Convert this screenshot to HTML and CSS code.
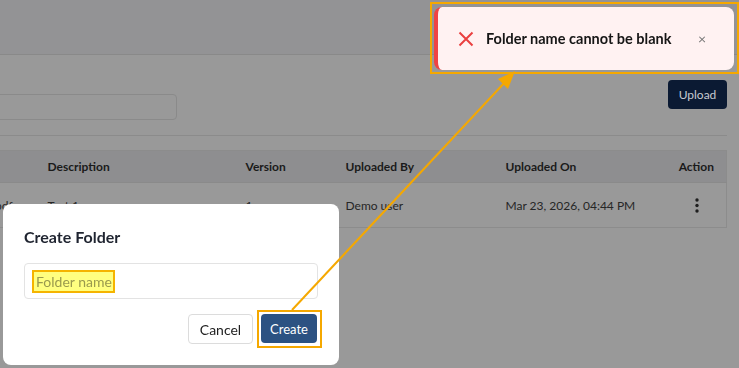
FILE: index.html
```html
<!DOCTYPE html>
<html lang="en">
<head>
<meta charset="utf-8">
<title>Documents</title>
<link rel="stylesheet" href="styles.css">
</head>
<body>
<div class="page">
  <header class="topbar"></header>
  <main class="main">
    <section class="toolbar">
      <input class="search" type="text" aria-label="Search">
      <button class="upload">Upload</button>
    </section>
    <section class="content">
      <table class="files">
        <colgroup>
          <col class="c-name"><col class="c-desc"><col class="c-ver"><col class="c-by"><col class="c-on"><col class="c-act">
        </colgroup>
        <thead>
          <tr><th>Name</th><th>Description</th><th>Version</th><th>Uploaded By</th><th>Uploaded On</th><th class="act">Action</th></tr>
        </thead>
        <tbody>
          <tr>
            <td>project_plan_v7.pdf</td><td>Test 1</td><td>1</td><td>Demo user</td><td>Mar 23, 2026, 04:44 PM</td>
            <td class="act"><svg class="kebab" width="4" height="15" viewBox="0 0 4 15"><circle cx="2" cy="2" r="1.7"/><circle cx="2" cy="7.5" r="1.7"/><circle cx="2" cy="13" r="1.7"/></svg></td>
          </tr>
        </tbody>
      </table>
    </section>
  </main>
</div>

<div class="toast" role="alert">
  <svg class="toast-icon" width="16" height="16" viewBox="0 0 16 16"><path d="M1.5 1.5 L14.5 14.5 M14.5 1.5 L1.5 14.5"/></svg>
  <span class="toast-text">Folder name cannot be blank</span>
  <span class="toast-close">&#215;</span>
</div>

<div class="modal" role="dialog">
  <h2 class="modal-title">Create Folder</h2>
  <div class="field">
    <input class="name-input" type="text" placeholder="Folder name">
    <span class="mark"></span>
  </div>
  <div class="actions">
    <button class="btn btn-cancel">Cancel</button>
    <button class="btn btn-create">Create</button>
  </div>
</div>

<svg class="arrow" width="739" height="368" viewBox="0 0 739 368">
  <line x1="292" y1="310" x2="507" y2="80"/>
  <polygon points="515,71 498,79 508,89"/>
</svg>
</body>
</html>
```

FILE: styles.css
```css
* { box-sizing: border-box; }
html, body { margin: 0; padding: 0; }
body {
  width: 739px;
  height: 368px;
  overflow: hidden;
  background: #999999;
  font-family: Lato, "Noto Sans", sans-serif;
  color: #1c1c1c;
}
.page { width: 739px; height: 368px; overflow: hidden; }
.topbar {
  height: 55px;
  background: #939395;
  border-bottom: 1px solid #898989;
}
.main { margin-left: -120px; padding: 0 12px 0 16px; }
.toolbar {
  height: 81px;
  display: flex;
  justify-content: space-between;
  align-items: flex-start;
  padding: 25px 0 15px;
  border-bottom: 1px solid #8b8b8b;
}
.search {
  align-self: flex-end;
  width: 281px;
  height: 26px;
  background: transparent;
  border: 1px solid #8a8a8a;
  border-radius: 4px;
}
.upload {
  width: 59px;
  height: 29px;
  background: #0b1a33;
  color: #c6cad1;
  border: 0;
  border-radius: 4px;
  font-family: inherit;
  font-size: 12px;
  padding: 0;
}
.content { padding-top: 14px; }
.files {
  width: 100%;
  table-layout: fixed;
  border-collapse: collapse;
  border: 1px solid #8c8c8c;
  font-size: 12px;
}
.c-name { width: 139px; }
.c-desc { width: 198px; }
.c-ver { width: 100px; }
.c-by { width: 160px; }
.c-on { width: 160px; }
.files th {
  height: 32px;
  background: #8e8e90;
  text-align: left;
  font-weight: 700;
  padding: 0 12px;
  color: #1a1a1a;
  border-bottom: 1px solid #8a8a8a;
}
.files td {
  height: 45px;
  padding: 0 12px;
  color: #262626;
  white-space: nowrap;
  overflow: hidden;
}
.files .act { text-align: right; }
.files td.act { padding-right: 27px; }
.kebab { fill: #1e1e1e; vertical-align: middle; }

.toast {
  position: fixed;
  left: 434px;
  top: 7px;
  width: 300px;
  height: 63px;
  display: flex;
  align-items: center;
  background: #fff2f2;
  border-left: 4px solid #ef4444;
  border-radius: 8px;
  padding: 0 28px 0 20px;
}
.toast::after {
  content: "";
  position: absolute;
  left: -8px;
  right: -5px;
  top: -5px;
  bottom: -4px;
  border: 2px solid #f5a800;
}
.toast-icon { stroke: #ea4040; stroke-width: 2; fill: none; flex: none; }
.toast-text {
  margin-left: 12px;
  font-size: 14.5px;
  font-weight: 700;
  color: #161616;
}
.toast-close {
  margin-left: auto;
  font-size: 14px;
  color: #777;
  line-height: 1;
}

.modal {
  position: fixed;
  left: 3px;
  top: 204px;
  width: 336px;
  height: 161px;
  background: #ffffff;
  border-radius: 8px;
  padding: 23px 21px 21px;
}
.modal-title {
  margin: 0;
  font-size: 16px;
  line-height: 20px;
  font-weight: 700;
  color: #1f2430;
}
.field { position: relative; margin-top: 16px; }
.name-input {
  display: block;
  width: 294px;
  height: 36px;
  border: 1px solid #e3e3e3;
  border-radius: 4px;
  padding: 0 11px;
  font-family: inherit;
  font-size: 14px;
  color: #333;
  background: #fff;
}
.name-input::placeholder { color: #9a9a9a; }
.mark {
  position: absolute;
  left: 8px;
  top: 7px;
  width: 83px;
  height: 23px;
  background: #ffff80;
  mix-blend-mode: multiply;
  border: 2px solid #f5b400;
}
.actions {
  display: flex;
  justify-content: flex-end;
  gap: 8px;
  margin-top: 15px;
  padding-right: 1px;
}
.btn {
  font-family: inherit;
  font-size: 13px;
  border-radius: 4px;
  padding: 0;
  height: 30px;
}
.btn-cancel {
  width: 65px;
  background: #fff;
  border: 1px solid #dcdcdc;
  color: #222;
  font-size: 14px;
}
.btn-create {
  position: relative;
  width: 56px;
  height: 29px;
  background: #2c5282;
  border: 0;
  color: #fff;
}
.btn-create::after {
  content: "";
  position: absolute;
  left: -4px;
  right: -5px;
  top: -4px;
  bottom: -5px;
  border: 2px solid #f5a800;
}
.arrow {
  position: fixed;
  left: 0;
  top: 0;
  pointer-events: none;
}
.arrow line { stroke: #f5a800; stroke-width: 2; }
.arrow polygon { fill: #f5a800; }
```
